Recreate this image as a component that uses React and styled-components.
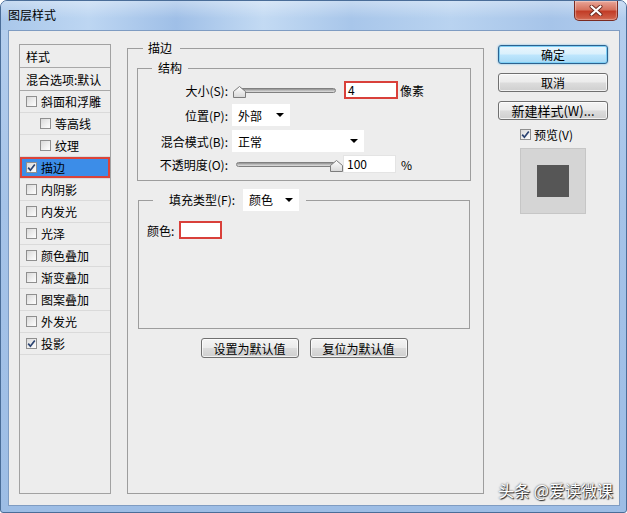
import React from "react";
import styled, { createGlobalStyle } from "styled-components";

const GlobalStyle = createGlobalStyle`
  html, body { margin: 0; padding: 0; background: #ffffff; }
  body {
    font-family: "Noto Sans CJK SC", "Liberation Sans", sans-serif;
    font-size: 12px;
    color: #000;
  }
  * { box-sizing: border-box; }
`;

const Window = styled.div`
  width: 627px;
  height: 513px;
  display: flex;
  flex-direction: column;
  border: 1px solid #4a6d98;
  border-radius: 7px 7px 3px 3px;
  background: linear-gradient(180deg, #b6cfee 0%, #a5c3e8 40%, #9dbde5 100%);
  overflow: hidden;
`;

const TitleBar = styled.div`
  height: 29px;
  display: flex;
  align-items: flex-start;
  padding-left: 7px;
  background:
    linear-gradient(180deg, rgba(255,255,255,0.35) 0%, rgba(255,255,255,0) 60%),
    linear-gradient(90deg, #a9c7ea 0%, #bdd6f2 14%, #9fbfe7 28%, #c3daf3 42%, #a8c6ea 56%, #b9d3f0 72%, #a6c4e9 88%, #b2cdee 100%);
`;

const Title = styled.div`
  margin-top: 6px;
  line-height: 16px;
  font-size: 12px;
  color: #000;
`;

const CloseButton = styled.div`
  margin-left: auto;
  margin-right: 8px;
  width: 44px;
  height: 20px;
  border: 1px solid #7a2b22;
  border-top: none;
  border-radius: 0 0 5px 5px;
  background: linear-gradient(180deg, #e9a597 0%, #d6735f 45%, #c23d27 55%, #d2674f 100%);
  display: flex;
  align-items: center;
  justify-content: center;
  box-shadow: inset 0 0 1px 1px rgba(255,255,255,0.35);
`;

const Client = styled.div`
  position: relative;
  margin: 0 6px 0 7px;
  height: 476px;
  border: 1px solid #7f9cc2;
  background: #ededed;
  display: flex;
  align-items: flex-start;
  padding: 9px 0 0 10px;
`;

/* ---------- left style list ---------- */
const StyleList = styled.div`
  margin-top: 4px;
  width: 92px;
  height: 450px;
  border: 1px solid #a2a2a2;
  display: flex;
  flex-direction: column;
`;

const HeaderRow = styled.div`
  height: 23px;
  border-bottom: 1px solid #a8a8a8;
  display: flex;
  align-items: center;
  padding-left: 6px;
  white-space: nowrap;
`;

const ItemRow = styled.div`
  height: 22px;
  border-bottom: 1px solid #dadada;
  display: flex;
  align-items: center;
  gap: 4px;
  padding-left: ${(p) => (p.$indent ? 20 : 6)}px;
  white-space: nowrap;
  background: ${(p) => (p.$selected ? "#3c8de8" : "transparent")};
  box-shadow: ${(p) => (p.$selected ? "inset 0 0 0 2px #dc4339" : "none")};
`;

const Box = styled.span`
  width: 11px;
  height: 11px;
  flex: none;
  border: 1px solid #8f8f8f;
  background: linear-gradient(135deg, #d9d9d9 0%, #f4f4f4 70%, #fdfdfd 100%);
  display: inline-flex;
  align-items: center;
  justify-content: center;
`;

const CheckBox = ({ checked }) => (
  <Box>
    {checked && (
      <svg width="9" height="9" viewBox="0 0 9 9">
        <path d="M1.2 4.6 L3.4 7.2 L7.8 1.4" fill="none" stroke="#2b4371" strokeWidth="1.7" />
      </svg>
    )}
  </Box>
);

/* ---------- group boxes ---------- */
const Group = styled.fieldset`
  margin: ${(p) => p.$margin || "0"};
  padding: 0;
  min-width: 0;
  border: 1px solid #9d9d9d;
  width: ${(p) => (p.$w ? `${p.$w}px` : "auto")};
  height: ${(p) => (p.$h ? `${p.$h}px` : "auto")};
`;

const Legend = styled.legend`
  margin-left: ${(p) => p.$ml}px;
  padding: ${(p) => p.$pad};
  line-height: 16px;
  font-size: 12px;
`;

const FillLegendInner = styled.div`
  height: 22px;
  display: flex;
  align-items: center;
  gap: 8px;
  padding: 0 7px 0 16px;
  white-space: nowrap;
`;

const StrokeBody = styled.div`
  padding: 0 12px 0 9px;
  display: flex;
  flex-direction: column;
`;

const StructBody = styled.div`
  padding: 2px 0 6px 0;
  display: flex;
  flex-direction: column;
`;

const Row = styled.div`
  height: ${(p) => p.$h}px;
  display: flex;
  align-items: center;
  white-space: nowrap;
`;

const Label = styled.span`
  width: 90px;
  text-align: right;
  flex: none;
`;

const SliderWrap = styled.div`
  position: relative;
  width: 100px;
  height: 22px;
  margin-left: 8px;
  display: flex;
  align-items: center;
`;

const Track = styled.div`
  width: 100%;
  height: 5px;
  border-radius: 3px;
  border: 1px solid #808080;
  background: linear-gradient(180deg, #909090 0%, #c4c4c4 60%, #e0e0e0 100%);
`;

const Thumb = styled.svg`
  position: absolute;
  top: 7px;
  left: ${(p) => p.$left}px;
`;

const Slider = ({ thumbLeft }) => (
  <SliderWrap>
    <Track />
    <Thumb $left={thumbLeft} width="13" height="12" viewBox="0 0 13 12">
      <defs>
        <linearGradient id={`tg${thumbLeft}`} x1="0" y1="0" x2="0" y2="1">
          <stop offset="0" stopColor="#ffffff" />
          <stop offset="1" stopColor="#d8d8d8" />
        </linearGradient>
      </defs>
      <path d="M6.5 0.5 L12.5 5.5 L12.5 11.5 L0.5 11.5 L0.5 5.5 Z" fill={`url(#tg${thumbLeft})`} stroke="#7d7d7d" />
    </Thumb>
  </SliderWrap>
);

const Input = styled.div`
  width: ${(p) => p.$w}px;
  height: 18px;
  margin-left: ${(p) => p.$ml}px;
  background: #fff;
  border: ${(p) => (p.$red ? "2px solid #d9403a" : "1px solid #e4e4e4")};
  display: flex;
  align-items: center;
  padding-left: ${(p) => (p.$red ? 2 : 3)}px;
  line-height: 14px;
`;

const Unit = styled.span`
  margin-left: ${(p) => p.$ml}px;
`;

const Select = styled.div`
  width: ${(p) => p.$w}px;
  height: 22px;
  margin-left: ${(p) => p.$ml || 0}px;
  background: #fff;
  display: flex;
  align-items: center;
  padding: 0 6px;
  flex: none;
`;

const Arrow = styled.span`
  margin-left: auto;
  width: 0;
  height: 0;
  border-left: 4px solid transparent;
  border-right: 4px solid transparent;
  border-top: 4px solid #000;
`;

const FillBody = styled.div`
  height: 117px;
  padding: 10px 8px 8px;
`;

const ColorRow = styled.div`
  display: flex;
  align-items: center;
  gap: 5px;
`;

const Swatch = styled.div`
  width: 43px;
  height: 18px;
  background: #fff;
  border: 2px solid #d9403a;
`;

const ButtonRow = styled.div`
  margin-top: 9px;
  display: flex;
  justify-content: center;
  gap: 11px;
`;

const Button = styled.div`
  width: ${(p) => p.$w}px;
  height: ${(p) => p.$h}px;
  border: 1px solid ${(p) => (p.$primary ? "#2c6290" : "#707070")};
  border-radius: 3px;
  background: ${(p) =>
    p.$primary
      ? "linear-gradient(180deg, #eaf6fd 0%, #d9f0fc 48%, #bee6fd 52%, #a7d9f5 100%)"
      : "linear-gradient(180deg, #f4f4f4 0%, #ebebeb 48%, #dcdcdc 52%, #cfcfcf 100%)"};
  box-shadow: ${(p) =>
    p.$primary ? "inset 0 0 0 1px #7fd0f6, 0 0 2px #5bb6e8" : "inset 0 0 0 1px rgba(255,255,255,0.7)"};
  display: flex;
  align-items: center;
  justify-content: center;
  font-size: ${(p) => p.$fs || 12}px;
  white-space: nowrap;
`;

/* ---------- right column ---------- */
const RightCol = styled.div`
  margin: 5px 0 0 14px;
  width: 110px;
  display: flex;
  flex-direction: column;
  gap: 9px;
`;

const PreviewCheck = styled.div`
  margin: -2px 0 0 22px;
  height: 14px;
  display: flex;
  align-items: center;
  gap: 3px;
  font-size: 12px;
`;

const PreviewBox = styled.div`
  margin: -2px 0 0 22px;
  width: 66px;
  height: 66px;
  background: #d5d5d5;
  border: 1px solid #c6c6c6;
  display: flex;
  align-items: center;
  justify-content: center;
`;

const PreviewSquare = styled.div`
  width: 32px;
  height: 32px;
  background: #565656;
`;

const Watermark = styled.div`
  position: absolute;
  right: 6px;
  bottom: 3px;
  font-size: 16px;
  color: #ffffff;
  text-shadow: 1px 1px 1px #222, 0 0 2px #333;
`;

const BottomFrame = styled.div`
  height: 6px;
`;

const items = [
  { label: "斜面和浮雕" },
  { label: "等高线", indent: true },
  { label: "纹理", indent: true },
  { label: "描边", checked: true, selected: true },
  { label: "内阴影" },
  { label: "内发光" },
  { label: "光泽" },
  { label: "颜色叠加" },
  { label: "渐变叠加" },
  { label: "图案叠加" },
  { label: "外发光" },
  { label: "投影", checked: true },
];

export default function App() {
  return (
    <>
      <GlobalStyle />
      <Window>
        <TitleBar>
          <Title>图层样式</Title>
          <CloseButton>
            <svg width="14" height="11" viewBox="0 0 14 11">
              <path d="M2.5 1.5 L11.5 9.5 M11.5 1.5 L2.5 9.5" stroke="#6d2a20" strokeWidth="4" strokeLinecap="round" />
              <path d="M2.5 1.5 L11.5 9.5 M11.5 1.5 L2.5 9.5" stroke="#ffffff" strokeWidth="2.2" strokeLinecap="round" />
            </svg>
          </CloseButton>
        </TitleBar>
        <Client>
          <StyleList>
            <HeaderRow>样式</HeaderRow>
            <HeaderRow>混合选项:默认</HeaderRow>
            {items.map((it) => (
              <ItemRow key={it.label} $indent={it.indent} $selected={it.selected}>
                <CheckBox checked={it.checked} />
                <span>{it.label}</span>
              </ItemRow>
            ))}
          </StyleList>

          <Group $w={357} $h={454} $margin="0 0 0 16px">
            <Legend $ml={15} $pad="0 8px 0 5px">描边</Legend>
            <StrokeBody>
              <Group $margin="4px 0 0 0">
                <Legend $ml={14} $pad="0 6px">结构</Legend>
                <StructBody>
                  <Row $h={24}>
                    <Label>大小(S):</Label>
                    <Slider thumbLeft={-3} />
                    <Input $w={54} $ml={8} $red>4</Input>
                    <Unit $ml={2}>像素</Unit>
                  </Row>
                  <Row $h={26}>
                    <Label>位置(P):</Label>
                    <Select $w={58} $ml={4}>
                      外部
                      <Arrow />
                    </Select>
                  </Row>
                  <Row $h={26}>
                    <Label>混合模式(B):</Label>
                    <Select $w={132} $ml={4}>
                      正常
                      <Arrow />
                    </Select>
                  </Row>
                  <Row $h={20}>
                    <Label>不透明度(O):</Label>
                    <Slider thumbLeft={94} />
                    <Input $w={53} $ml={7}>100</Input>
                    <Unit $ml={5}>%</Unit>
                  </Row>
                </StructBody>
              </Group>

              <Group $margin="8px 1px 0 1px">
                <Legend $ml={14} $pad="0">
                  <FillLegendInner>
                    <span>填充类型(F):</span>
                    <Select $w={56}>
                      颜色
                      <Arrow />
                    </Select>
                  </FillLegendInner>
                </Legend>
                <FillBody>
                  <ColorRow>
                    <span>颜色:</span>
                    <Swatch />
                  </ColorRow>
                </FillBody>
              </Group>

              <ButtonRow>
                <Button $w={98} $h={20}>设置为默认值</Button>
                <Button $w={98} $h={20}>复位为默认值</Button>
              </ButtonRow>
            </StrokeBody>
          </Group>

          <RightCol>
            <Button $w={110} $h={19} $primary>确定</Button>
            <Button $w={110} $h={19}>取消</Button>
            <Button $w={110} $h={19} $fs={13}>新建样式(W)...</Button>
            <PreviewCheck>
              <CheckBox checked />
              <span>预览(V)</span>
            </PreviewCheck>
            <PreviewBox>
              <PreviewSquare />
            </PreviewBox>
          </RightCol>

          <Watermark>头条 @爱读微课</Watermark>
        </Client>
        <BottomFrame />
      </Window>
    </>
  );
}
